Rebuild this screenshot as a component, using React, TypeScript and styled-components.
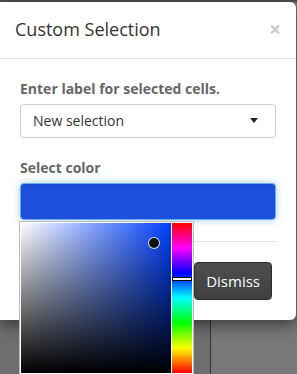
import React from "react";
import styled, { createGlobalStyle } from "styled-components";

const GlobalStyle = createGlobalStyle`
  html, body { margin: 0; padding: 0; }
  body {
    width: 297px;
    height: 374px;
    overflow: hidden;
    font-family: "Open Sans", "Liberation Sans", sans-serif;
    background: #777;
  }
  * { box-sizing: border-box; }
`;

const Page = styled.div`
  position: relative;
  width: 297px;
  height: 374px;
  display: flex;
  flex-direction: column;
  background: #777;
`;

const PageTop = styled.div`
  height: 2px;
  background: #4f4f4f;
`;

const PageBody = styled.div`
  flex: 1;
  display: flex;
`;

const PageColumn = styled.div<{ $w?: number; $bg: string; $line?: boolean }>`
  ${(p) => (p.$w ? `width: ${p.$w}px;` : "flex: 1;")}
  background: ${(p) => p.$bg};
  ${(p) => (p.$line ? "border-right: 1px solid #333;" : "")}
`;

const Modal = styled.div`
  position: absolute;
  top: 2px;
  left: 0;
  width: 296px;
  background: #fff;
  border-radius: 0 6px 6px 0;
  box-shadow: 0 5px 15px rgba(0, 0, 0, 0.5);
`;

const Header = styled.div`
  padding: 15px;
  border-bottom: 1px solid #e5e5e5;
  display: flex;
  align-items: flex-start;
  justify-content: space-between;
`;

const Title = styled.h4`
  margin: 0;
  font-size: 18px;
  font-weight: 400;
  line-height: 1.42857;
  color: #333;
`;

const Close = styled.button`
  border: 0;
  background: transparent;
  padding: 0;
  margin-top: 2px;
  font-family: "Open Sans", "Liberation Sans", sans-serif;
  font-size: 21px;
  font-weight: 700;
  line-height: 1;
  color: #000;
  opacity: 0.2;
  cursor: pointer;
`;

const Body = styled.div`
  padding: 20px;
`;

const Group = styled.div<{ $mb: number }>`
  margin-bottom: ${(p) => p.$mb}px;
`;

const Label = styled.label`
  display: block;
  margin-bottom: 5px;
  font-size: 14px;
  line-height: 20px;
  font-weight: 700;
  color: #666;
`;

const SelectBox = styled.div`
  height: 34px;
  padding: 6px 17px 6px 12px;
  border: 1px solid #ccc;
  border-radius: 4px;
  display: flex;
  align-items: center;
  justify-content: space-between;
  font-size: 14px;
  color: #333;
`;

const Caret = styled.span`
  width: 0;
  height: 0;
  border-left: 4.5px solid transparent;
  border-right: 4.5px solid transparent;
  border-top: 5px solid #222;
`;

const ColorField = styled.div`
  position: relative;
`;

const ColorInput = styled.div<{ $color: string }>`
  height: 37px;
  border: 1px solid #66afe9;
  border-radius: 4px;
  background: ${(p) => p.$color};
  box-shadow: inset 0 1px 1px rgba(0, 0, 0, 0.075), 0 0 8px rgba(102, 175, 233, 0.6);
`;

const Picker = styled.div`
  position: absolute;
  top: 38px;
  left: -1px;
  z-index: 5;
  display: flex;
  gap: 1px;
  padding: 1px;
  background: #fff;
  border: 1px solid #bbb;
`;

const SatVal = styled.div<{ $hue: number }>`
  position: relative;
  width: 150px;
  height: 150px;
  background: linear-gradient(to top, #000, rgba(0, 0, 0, 0)),
    linear-gradient(to right, #fff, rgba(255, 255, 255, 0)),
    hsl(${(p) => p.$hue}, 100%, 50%);
`;

const Dot = styled.span`
  position: absolute;
  width: 10px;
  height: 10px;
  margin: -5px 0 0 -5px;
  border-radius: 50%;
  background: #111;
  box-shadow: 0 0 0 1px rgba(255, 255, 255, 0.8);
`;

const HueBar = styled.div`
  position: relative;
  width: 20px;
  height: 150px;
  background: linear-gradient(
    to bottom,
    #f00 0%,
    #f0f 16.66%,
    #00f 33.33%,
    #0ff 50%,
    #0f0 66.66%,
    #ff0 83.33%,
    #f00 100%
  );
`;

const HueMark = styled.span`
  position: absolute;
  left: 0;
  right: 0;
  height: 4px;
  margin-top: -2px;
  background: #fff;
  border: 1px solid #000;
`;

const Footer = styled.div`
  border-top: 1px solid #e5e5e5;
  padding: 20px 4px 0 0;
  display: flex;
  justify-content: flex-end;
`;

const Button = styled.button`
  height: 38px;
  padding: 0 11px;
  border: 1px solid #2c2c2c;
  border-radius: 4px;
  background: linear-gradient(to bottom, #4e4e4e, #404040);
  color: #fff;
  font-family: "Open Sans", "Liberation Sans", sans-serif;
  font-size: 15px;
  line-height: 22px;
  cursor: pointer;
`;

export default function App() {
  const hue = 225;
  const sat = 0.885;
  const val = 0.865;
  const huePos = ((360 - hue) / 360) * 100;
  return (
    <>
      <GlobalStyle />
      <Page>
        <PageTop />
        <PageBody>
          <PageColumn $w={211} $bg="#6e6e6e" $line />
          <PageColumn $bg="#787878" />
        </PageBody>
        <Modal>
          <Header>
            <Title>Custom Selection</Title>
            <Close aria-label="Close">×</Close>
          </Header>
          <Body>
            <Group $mb={20}>
              <Label>Enter label for selected cells.</Label>
              <SelectBox>
                <span>New selection</span>
                <Caret />
              </SelectBox>
            </Group>
            <Group $mb={21}>
              <Label>Select color</Label>
              <ColorField>
                <ColorInput $color="#1e4fdc" />
                <Picker>
                  <SatVal $hue={hue}>
                    <Dot style={{ left: `${sat * 100}%`, top: `${(1 - val) * 100}%` }} />
                  </SatVal>
                  <HueBar>
                    <HueMark style={{ top: `${huePos}%` }} />
                  </HueBar>
                </Picker>
              </ColorField>
            </Group>
            <Footer>
              <Button>Dismiss</Button>
            </Footer>
          </Body>
        </Modal>
      </Page>
    </>
  );
}
